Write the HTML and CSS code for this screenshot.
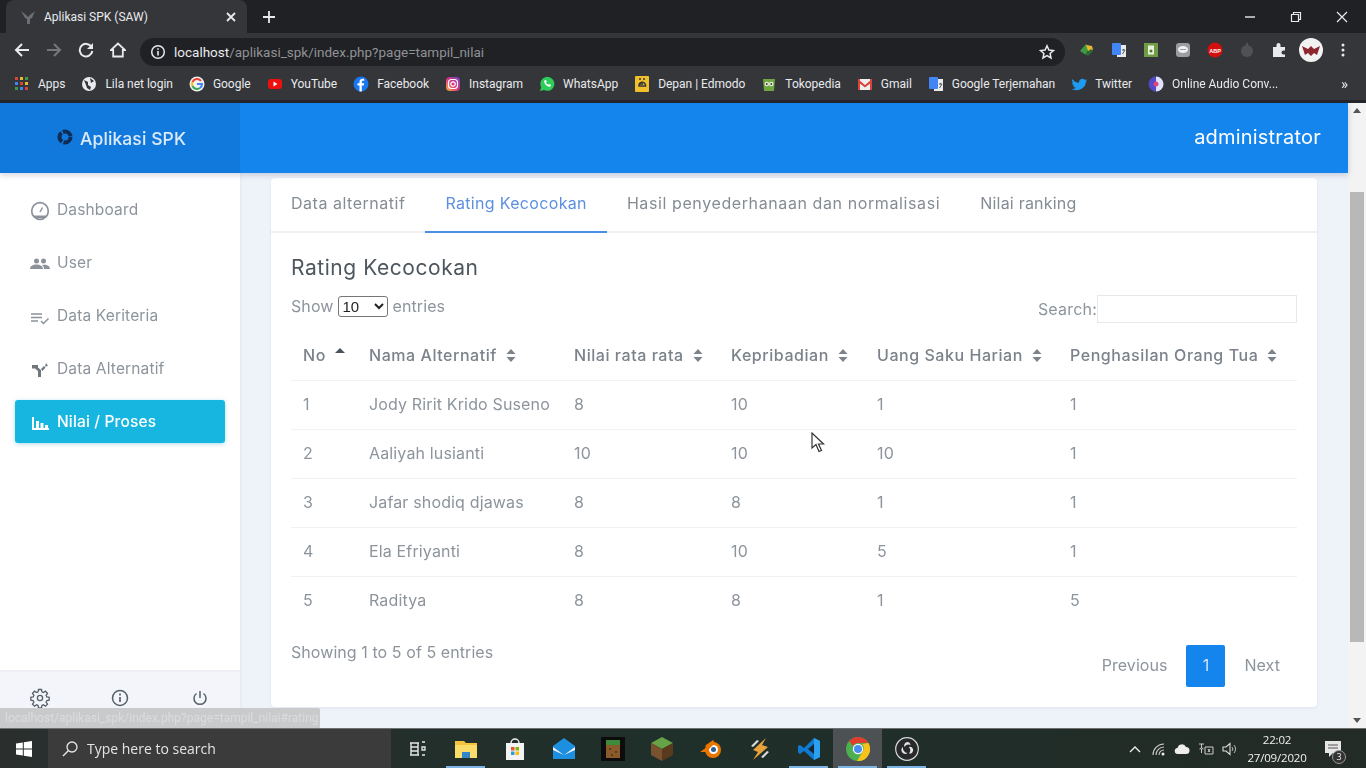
FILE: index.html
```html
<!DOCTYPE html>
<html lang="id">
<head>
<meta charset="utf-8">
<title>Aplikasi SPK (SAW)</title>
<link rel="stylesheet" href="styles.css">
</head>
<body>
<div class="screen">
  <div class="browser">
    <div class="tabstrip">
      <div class="tab">
        <svg class="ico16" viewBox="0 0 16 16"><path d="M1 2l5 4 2 2 2-2 5-4-3 7-2 1v5H7v-5L5 9z" fill="#6b6e73"/></svg>
        <span class="tab-title">Aplikasi SPK (SAW)</span>
        <svg class="tab-x" viewBox="0 0 10 10"><path d="M1 1l8 8M9 1L1 9" stroke="#e8eaed" stroke-width="1.8"/></svg>
      </div>
      <svg class="newtab" viewBox="0 0 12 12"><path d="M6 0v12M0 6h12" stroke="#e8eaed" stroke-width="1.8"/></svg>
      <div class="winbtns">
        <svg viewBox="0 0 12 12"><path d="M1 6h10" stroke="#e8eaed" stroke-width="1.4"/></svg>
        <svg viewBox="0 0 12 12"><path d="M1.5 3.5h7v7h-7zM3.5 3.5v-2h7v7h-2" fill="none" stroke="#e8eaed" stroke-width="1.2"/></svg>
        <svg viewBox="0 0 12 12"><path d="M1 1l10 10M11 1L1 11" stroke="#e8eaed" stroke-width="1.2"/></svg>
      </div>
    </div>
    <div class="toolbar">
      <div class="navs">
        <svg viewBox="0 0 16 16"><path d="M15 8H2M8 2L2 8l6 6" fill="none" stroke="#e8eaed" stroke-width="2"/></svg>
        <svg viewBox="0 0 16 16"><path d="M1 8h13M8 2l6 6-6 6" fill="none" stroke="#75777b" stroke-width="2"/></svg>
        <svg viewBox="0 0 16 16"><path d="M13.5 5A6.3 6.3 0 1 0 14.3 9" fill="none" stroke="#e8eaed" stroke-width="2"/><path d="M15 1v6H9z" fill="#e8eaed"/></svg>
        <svg viewBox="0 0 16 16"><path d="M8 1.5L1 8h2.2v6.5h9.6V8H15z" fill="none" stroke="#e8eaed" stroke-width="1.8"/></svg>
      </div>
      <div class="omnibox">
        <svg class="ico16" viewBox="0 0 16 16"><circle cx="8" cy="8" r="6.3" fill="none" stroke="#e8eaed" stroke-width="1.5"/><path d="M8 7v4.5M8 4.2v1.6" stroke="#e8eaed" stroke-width="1.6"/></svg>
        <span class="url"><b class="host">localhost</b>/aplikasi_spk/index.php?page=tampil_nilai</span>
        <svg class="star" viewBox="0 0 16 16"><path d="M8 1.8l1.9 4.2 4.6.5-3.4 3 .9 4.5L8 11.7 4 14l.9-4.5-3.4-3 4.6-.5z" fill="none" stroke="#e8eaed" stroke-width="1.5"/></svg>
      </div>
      <div class="exts">
        <svg viewBox="0 0 16 16"><path d="M1 9l6-7 3 3-3 8z" fill="#3f9b42"/><path d="M7 3l6 1 1 4-5 1z" fill="#e9b82e"/><path d="M6 12l6-5 2 2-5 5z" fill="#2d6b33"/></svg>
        <svg viewBox="0 0 16 16"><rect x="6" y="3" width="9" height="12" fill="#e8eaed"/><rect x="1" y="1" width="9" height="12" rx="1" fill="#4285f4"/><path d="M11 8h3M12.500 7v1M11.500 12l2.500-4" stroke="#555" fill="none"/></svg>
        <svg viewBox="0 0 16 16"><rect x="1" y="1" width="14" height="14" fill="#6f9c45"/><rect x="5" y="3.500" width="6" height="9" fill="#e9f1dc"/><circle cx="8" cy="9" r="1.500" fill="#55752f"/></svg>
        <svg viewBox="0 0 16 16"><rect x="1" y="1" width="14" height="14" rx="3" fill="#9b9da0"/><ellipse cx="8" cy="7.500" rx="5" ry="3.500" fill="#f1f1f1"/><path d="M5 7.500h6" stroke="#9b9da0"/></svg>
        <svg viewBox="0 0 16 16"><circle cx="8" cy="8" r="7.500" fill="#d1100f"/><text class="abp" x="8" y="10.500">ABP</text></svg>
        <svg viewBox="0 0 16 16"><circle cx="8" cy="9" r="6" fill="#505154"/><rect x="7" y="1" width="2" height="3" fill="#505154"/></svg>
        <svg viewBox="0 0 16 16"><path d="M2 5h3.500V3a2 2 0 0 1 4 0v2H14v3.500h-1.500a2 2 0 0 0 0 4H14V15H2z" fill="#e8eaed"/></svg>
        <svg class="avatar" viewBox="0 0 24 24"><circle cx="12" cy="12" r="12" fill="#f2f2f2"/><path d="M3 8l6 3 3-3 3 3 6-3-3 9-3-2-3 3-3-3-3 2z" fill="#8c2730"/></svg>
        <svg viewBox="0 0 16 16"><circle cx="8" cy="3" r="1.500" fill="#e8eaed"/><circle cx="8" cy="8" r="1.500" fill="#e8eaed"/><circle cx="8" cy="13" r="1.500" fill="#e8eaed"/></svg>
      </div>
    </div>
    <div class="bookmarks">
      <div class="bm"><svg viewBox="0 0 16 16"><path d="M1 1h3v3H1z" fill="#d8443a"/><path d="M6 1h3v3H6z" fill="#e9b82e"/><path d="M11 1h3v3h-3z" fill="#3f9b42"/><path d="M1 6h3v3H1z" fill="#4285f4"/><path d="M6 6h3v3H6z" fill="#d8443a"/><path d="M11 6h3v3h-3z" fill="#e9b82e"/><path d="M1 11h3v3H1z" fill="#3f9b42"/><path d="M6 11h3v3H6z" fill="#4285f4"/><path d="M11 11h3v3h-3z" fill="#d8443a"/></svg><span>Apps</span></div>
      <div class="bm"><svg viewBox="0 0 16 16"><circle cx="8" cy="8" r="7" fill="#e8eaed"/><path d="M3 4l4 2 0 3 3 2-1 3-3-2-1-3zM9 2l4 3-3 2z" fill="#35363a"/></svg><span>Lila net login</span></div>
      <div class="bm"><svg viewBox="0 0 16 16"><circle cx="8" cy="8" r="7.500" fill="#f1f1f1"/><path d="M12 5A5 5 0 0 0 3.500 6" fill="none" stroke="#ea4335" stroke-width="2"/><path d="M3.500 6a5 5 0 0 0 0 4" fill="none" stroke="#fbbc05" stroke-width="2"/><path d="M3.500 10A5 5 0 0 0 11 12" fill="none" stroke="#34a853" stroke-width="2"/><path d="M8 8h5a5 5 0 0 1-2 4" fill="none" stroke="#4285f4" stroke-width="2"/></svg><span>Google</span></div>
      <div class="bm"><svg viewBox="0 0 16 16"><rect x="1" y="3" width="14" height="10" rx="3" fill="#f00f0f"/><path d="M6.500 5.500l4 2.500-4 2.500z" fill="#fff"/></svg><span>YouTube</span></div>
      <div class="bm"><svg viewBox="0 0 16 16"><circle cx="8" cy="8" r="7.500" fill="#1877f2"/><path d="M8.800 15.500V9.500h2l.3-2.300H8.800V6c0-.8.3-1.200 1.200-1.200h1.200V2.800c-2.800-.5-4.700.3-4.700 3v1.400h-2v2.300h2v6z" fill="#fff"/></svg><span>Facebook</span></div>
      <div class="bm"><svg viewBox="0 0 16 16"><defs><linearGradient id="ig" x1="0" y1="1" x2="1" y2="0"><stop offset="0" stop-color="#f9b13d"/><stop offset=".5" stop-color="#d9307f"/><stop offset="1" stop-color="#6a49d0"/></linearGradient></defs><rect x="1" y="1" width="14" height="14" rx="4" fill="url(#ig)"/><rect x="3.500" y="3.500" width="9" height="9" rx="3" fill="none" stroke="#fff" stroke-width="1.200"/><circle cx="8" cy="8" r="2.200" fill="none" stroke="#fff" stroke-width="1.200"/></svg><span>Instagram</span></div>
      <div class="bm"><svg viewBox="0 0 16 16"><path d="M1 15l1.200-3.800A7 7 0 1 1 5 14z" fill="#2ecc5b"/><path d="M5.500 4.500c-1.500 2 2.500 7 6 6l.5-1.500-2-1-1 .8c-1-.5-1.500-1.200-2-2l.8-1-1-2z" fill="#fff"/></svg><span>WhatsApp</span></div>
      <div class="bm"><svg viewBox="0 0 16 16"><rect x="1" y="0" width="14" height="16" rx="1" fill="#f0bf2c"/><path d="M11.500 10H5a3 3 0 1 1 6.500-1zM5.500 8h3.500" fill="none" stroke="#35363a" stroke-width="1.500"/><path d="M5 3h2M9 3h2" stroke="#35363a" stroke-width="1.400"/></svg><span>Depan | Edmodo</span></div>
      <div class="bm"><svg viewBox="0 0 16 16"><path d="M2 3h12l-1 12H3z" fill="#6fa640"/><circle cx="5.800" cy="8" r="2.300" fill="#e6ecd5"/><circle cx="10.200" cy="8" r="2.300" fill="#e6ecd5"/><circle cx="5.800" cy="8" r=".9" fill="#333"/><circle cx="10.200" cy="8" r=".9" fill="#333"/></svg><span>Tokopedia</span></div>
      <div class="bm"><svg viewBox="0 0 16 16"><rect x="1" y="3" width="14" height="11" fill="#efefef"/><path d="M1 3l7 6 7-6v3l-7 5.500L1 6z M1 3h2v11H1z M13 3h2v11h-2z" fill="#d8443a"/></svg><span>Gmail</span></div>
      <div class="bm"><svg viewBox="0 0 16 16"><rect x="6" y="3" width="9" height="12" fill="#e8eaed"/><rect x="1" y="1" width="9" height="12" rx="1" fill="#4285f4"/><path d="M11 8h3M12.500 7v1M11.500 12l2.500-4" stroke="#555" fill="none"/></svg><span>Google Terjemahan</span></div>
      <div class="bm"><svg viewBox="0 0 16 16"><path d="M1 3c2 2.500 4 3.500 7 3.700C7.800 3 12 1.500 14 4l2-.7-1.200 2 1.200-.3-1.300 1.500C14.500 11 10 15 3.500 14 2.500 14 1.500 13.500 1 13c1.500 0 3-.3 4-1.200-1.500-.2-2.500-1-3-2.300h1.300C1.800 9 1 7.500 1 6.500l1.300.3C1 5.500.7 4.500 1 3z" fill="#1d9bf0"/></svg><span>Twitter</span></div>
      <div class="bm"><svg viewBox="0 0 16 16"><circle cx="8" cy="8" r="7.500" fill="#5248c8"/><path d="M8 .5a7.500 7.500 0 0 1 0 15z" fill="#dfe3fa"/><circle cx="8" cy="8" r="2.500" fill="#e0457a"/></svg><span>Online Audio Conv...</span></div>
      <span class="bm-more">»</span>
    </div>
  </div>

  <div class="app">
    <div class="page">
      <header class="topbar">
        <div class="brand">
          <svg viewBox="0 0 16 16"><circle cx="8" cy="8" r="5.500" fill="none" stroke="#0f2c55" stroke-width="4" stroke-dasharray="10 1.500"/></svg>
          <span>Aplikasi SPK</span>
        </div>
        <div class="user">administrator</div>
      </header>
      <div class="body">
        <aside class="sidebar">
          <nav class="menu">
            <a class="item"><svg viewBox="0 0 20 20"><circle cx="10" cy="10" r="8.300" fill="none" stroke="#8b929b" stroke-width="1.700"/><path d="M4 14.500h12l-1.500 2.500h-9z" fill="#8b929b"/><path d="M10 11l2.500-4.500" stroke="#8b929b" stroke-width="1.500"/></svg><span>Dashboard</span></a>
            <a class="item"><svg viewBox="0 0 20 20"><circle cx="6.500" cy="7" r="2.500" fill="#8b929b"/><circle cx="13.500" cy="7" r="2.500" fill="#8b929b"/><path d="M0 15c0-3 3-4.500 6.500-4.500S13 12 13 15zM14 15c0-1.500-.5-3-2-4 4-1 8 .5 8 4z" fill="#8b929b"/></svg><span>User</span></a>
            <a class="item"><svg viewBox="0 0 20 20"><path d="M1 7h11M1 10.500h11M1 14h7" stroke="#8b929b" stroke-width="1.500"/><path d="M11 14l2.500 2.500 5-5" fill="none" stroke="#8b929b" stroke-width="1.500"/></svg><span>Data Keriteria</span></a>
            <a class="item"><svg viewBox="0 0 20 20"><path d="M2 5h6v2.500L11 10v7H8v-6L5 8.500H2zM11 9l3-3 1.500 1.500L12.500 11z" fill="#6f767e"/><path d="M16 3l2 3-3 .5z" fill="#6f767e"/></svg><span>Data Alternatif</span></a>
            <a class="item active"><svg viewBox="0 0 20 20"><path d="M2 15h17v2H2zM2 4h2v11H2zM6 8h3v7H6zM10.500 10h3v5h-3zM15 12h3v3h-3z" fill="#fff"/></svg><span>Nilai / Proses</span></a>
          </nav>
          <div class="side-foot">
            <svg viewBox="0 0 20 20"><path d="M8.500 1.500h3l.4 2.400 1.500.7 2-1.400 2.100 2.100-1.400 2 .7 1.500 2.400.4v3l-2.400.4-.7 1.500 1.400 2-2.100 2.100-2-1.400-1.500.7-.4 2.400h-3l-.4-2.400-1.500-.7-2 1.400-2.100-2.100 1.400-2-.7-1.500-2.400-.4v-3l2.400-.4.7-1.500-1.400-2 2.100-2.100 2 1.400 1.500-.7z" fill="none" stroke="#55606b" stroke-width="1.300"/><circle cx="10" cy="10" r="2.600" fill="none" stroke="#55606b" stroke-width="1.300"/></svg>
            <svg viewBox="0 0 20 20"><circle cx="10" cy="10" r="7.500" fill="none" stroke="#55606b" stroke-width="1.500"/><path d="M10 9v5M10 5.500v2" stroke="#55606b" stroke-width="1.700"/></svg>
            <svg viewBox="0 0 20 20"><path d="M6.500 5.500a6 6 0 1 0 7 0M10 3v7" fill="none" stroke="#55606b" stroke-width="1.500"/></svg>
          </div>
        </aside>
        <main class="content">
          <section class="card">
            <div class="tabs">
              <a class="tb tb-a">Data alternatif</a>
              <a class="tb tb-b current">Rating Kecocokan</a>
              <a class="tb tb-c">Hasil penyederhanaan dan normalisasi</a>
              <a class="tb tb-d">Nilai ranking</a>
            </div>
            <div class="pane">
              <h2 class="title">Rating Kecocokan</h2>
              <div class="tools">
                <label class="len">Show
                  <select class="sel"><option>10</option></select>
                  entries</label>
                <label class="search">Search:<input class="q" type="text"></label>
              </div>
              <table class="grid">
                <colgroup>
                  <col class="c1"><col class="c2"><col class="c3"><col class="c4"><col class="c5"><col class="c6">
                </colgroup>
                <thead>
                  <tr>
                    <th><div class="th">No<svg class="up" viewBox="0 0 10 6"><path d="M5 0l5 5H0z" fill="#4a525b"/></svg></div></th>
                    <th><div class="th">Nama Alternatif<svg viewBox="0 0 10 13"><path d="M5 0l4.500 5H.5zM5 13L.5 8h9z" fill="#7c838b"/></svg></div></th>
                    <th><div class="th">Nilai rata rata<svg viewBox="0 0 10 13"><path d="M5 0l4.500 5H.5zM5 13L.5 8h9z" fill="#7c838b"/></svg></div></th>
                    <th><div class="th">Kepribadian<svg viewBox="0 0 10 13"><path d="M5 0l4.500 5H.5zM5 13L.5 8h9z" fill="#7c838b"/></svg></div></th>
                    <th><div class="th">Uang Saku Harian<svg viewBox="0 0 10 13"><path d="M5 0l4.500 5H.5zM5 13L.5 8h9z" fill="#7c838b"/></svg></div></th>
                    <th><div class="th">Penghasilan Orang Tua<svg viewBox="0 0 10 13"><path d="M5 0l4.500 5H.5zM5 13L.5 8h9z" fill="#7c838b"/></svg></div></th>
                  </tr>
                </thead>
                <tbody>
                  <tr><td>1</td><td>Jody Ririt Krido Suseno</td><td>8</td><td>10</td><td>1</td><td>1</td></tr>
                  <tr><td>2</td><td>Aaliyah lusianti</td><td>10</td><td>10</td><td>10</td><td>1</td></tr>
                  <tr><td>3</td><td>Jafar shodiq djawas</td><td>8</td><td>8</td><td>1</td><td>1</td></tr>
                  <tr><td>4</td><td>Ela Efriyanti</td><td>8</td><td>10</td><td>5</td><td>1</td></tr>
                  <tr><td>5</td><td>Raditya</td><td>8</td><td>8</td><td>1</td><td>5</td></tr>
                </tbody>
              </table>
              <div class="foot">
                <div class="info">Showing 1 to 5 of 5 entries</div>
                <div class="pager"><a class="pg">Previous</a><a class="pg on">1</a><a class="pg">Next</a></div>
              </div>
            </div>
          </section>
        </main>
      </div>
    </div>
    <div class="scrollbar">
      <span class="arrow-up"></span>
      <div class="thumb"></div>
      <span class="arrow-down"></span>
    </div>
    <div class="status">localhost/aplikasi_spk/index.php?page=tampil_nilai#rating</div>
    <svg class="cursor" viewBox="0 0 14 21"><path d="M1 1v15l4-3.500 3 7 2.500-1-3-6.500h5z" fill="#fff" stroke="#333" stroke-width="1.200"/></svg>
  </div>

  <footer class="taskbar">
    <div class="start"><svg viewBox="0 0 16 16"><path d="M0 2.500l6.800-1v6H0zM7.800 1.300L16 0v7.500H7.800zM0 8.500h6.800v6l-6.800-1zM7.800 8.500H16V16l-8.200-1.300z" fill="#fff"/></svg></div>
    <div class="searchbox">
      <svg viewBox="0 0 16 16"><circle cx="10" cy="6" r="5" fill="none" stroke="#e6e6e6" stroke-width="1.300"/><path d="M6.500 9.500L1 15" stroke="#e6e6e6" stroke-width="1.500"/></svg>
      <span>Type here to search</span>
    </div>
    <div class="apps">
      <div class="app-i"><svg viewBox="0 0 20 20"><path d="M3 4h9M3 16h9M4 4v12M11 4v12M4 8h7M4 12h7" fill="none" stroke="#e6e6e6" stroke-width="1.400"/><path d="M15 3h3M15 16h3M15 8h3v3h-3z" fill="none" stroke="#e6e6e6" stroke-width="1.300"/></svg></div>
      <div class="app-i open"><svg viewBox="0 0 24 24"><path d="M1 4h9l2 2h11v15H1z" fill="#f5c33b"/><path d="M1 8h22v13H1z" fill="#fbdc6a"/><path d="M8 15h8v6H8z" fill="#2f86c9"/></svg></div>
      <div class="app-i"><svg viewBox="0 0 24 24"><path d="M8 6a4 4 0 0 1 8 0" fill="none" stroke="#eee" stroke-width="1.500"/><path d="M3 6h18v17H3z" fill="#f3f3f3"/><path d="M8 10h3.500v3.500H8z" fill="#e8542c"/><path d="M12.500 10H16v3.500h-3.500z" fill="#7fba00"/><path d="M8 14.500h3.500V18H8z" fill="#2a9fe0"/><path d="M12.500 14.500H16V18h-3.500z" fill="#fbbc05"/></svg></div>
      <div class="app-i"><svg viewBox="0 0 24 24"><path d="M1 9l11-8 11 8v13H1z" fill="#1c8fe0"/><path d="M1 10l11 8 11-8v3l-11 5-11-5z" fill="#e9f4fc"/></svg></div>
      <div class="app-i"><svg viewBox="0 0 24 24"><rect width="24" height="24" fill="#0c0c0c"/><rect x="5" y="3" width="14" height="18" fill="#8b5a2b"/><rect x="5" y="3" width="14" height="5" fill="#3f8b3c"/><path d="M8 11h2v2H8zM14 14h2v2h-2zM10 17h2v2h-2z" fill="#5c3a1a"/></svg></div>
      <div class="app-i"><svg viewBox="0 0 24 24"><path d="M12 0l11 6-11 6L1 6z" fill="#66a347"/><path d="M1 6l11 6v12L1 18z" fill="#7a5230"/><path d="M23 6l-11 6v12l11-6z" fill="#593a1e"/></svg></div>
      <div class="app-i"><svg viewBox="0 0 24 24"><circle cx="14" cy="13" r="8" fill="#ea7600"/><circle cx="14.500" cy="12.500" r="4.500" fill="#fff"/><circle cx="14.500" cy="12.500" r="2.500" fill="#285f9f"/><path d="M1 15l7-5-2-1 8-6 2 3-9 9z" fill="#ea7600"/></svg></div>
      <div class="app-i"><svg viewBox="0 0 24 24"><path d="M18 1L5 13l5 2-5 8 15-13-6-2z" fill="#e8a33c"/><path d="M3 9l6-6 2 1-6 6zM21 15l-6 6-2-1 6-6z" fill="#dcdcdc"/></svg></div>
      <div class="app-i open"><svg viewBox="0 0 24 24"><path d="M17 1l6 3v16l-6 3-10-9-4 3-2-1.500V9L3 8l4 3z" fill="#0f7ad2"/><path d="M17 1l6 3v16l-6 3z" fill="#2aa0ef"/><path d="M17 7v10l-6-5z" fill="#1a2530"/></svg></div>
      <div class="app-i open chrome"><svg viewBox="0 0 24 24"><circle cx="12" cy="12" r="12" fill="#4caf50"/><path d="M12 0a12 12 0 0 1 10.400 6H12a6 6 0 0 0-5.200 3L3.200 3.900A12 12 0 0 1 12 0z" fill="#e33b2e"/><path d="M22.400 6A12 12 0 0 1 11 24l5.300-8.800A6 6 0 0 0 16 7z" fill="#f9c21a"/><circle cx="12" cy="12" r="5.200" fill="#fff"/><circle cx="12" cy="12" r="4" fill="#4a8df0"/></svg></div>
      <div class="app-i open"><svg viewBox="0 0 24 24"><circle cx="12" cy="12" r="11.300" fill="#28292b" stroke="#d8d8d8" stroke-width="1.200"/><path d="M12 5a3.500 3.500 0 0 1 3.500 3 5 5 0 0 0-6 2A3.500 3.500 0 0 1 12 5zM18 12a3.500 3.500 0 0 1-4 4.500 5 5 0 0 0-.2-6.500A3.500 3.500 0 0 1 18 12zM7 15a3.500 3.500 0 0 1 1-5 5 5 0 0 0 4.500 6A3.500 3.500 0 0 1 7 15z" fill="#e4e4e4"/></svg></div>
    </div>
    <div class="tray">
      <svg viewBox="0 0 12 8"><path d="M1 7l5-5 5 5" fill="none" stroke="#eee" stroke-width="1.400"/></svg>
      <svg viewBox="0 0 16 16"><path d="M3 14A11 11 0 0 1 14 3M6 14a8 8 0 0 1 8-8M9 14a5 5 0 0 1 5-5" fill="none" stroke="#ccc" stroke-width="1.100"/><circle cx="13" cy="13" r="1.500" fill="#eee"/></svg>
      <svg viewBox="0 0 16 16"><path d="M4 13a3 3 0 0 1-.5-6 4.500 4.500 0 0 1 8.500-1 3.500 3.500 0 0 1 0 7z" fill="#eee"/></svg>
      <svg viewBox="0 0 16 16"><path d="M1 3h5M3.500 3v3a2 2 0 0 0 2 2M3.500 6a2 2 0 0 1-2 2M3.500 8v4M7 6h8v7H7zM10 8l2 3M12 8l-2 3" fill="none" stroke="#ccc" stroke-width="1"/></svg>
      <svg viewBox="0 0 16 16"><path d="M1 6h3l4-3.500v11L4 10H1z" fill="none" stroke="#ddd" stroke-width="1.100"/><path d="M10 6a3 3 0 0 1 0 4M12 4a6 6 0 0 1 0 8" fill="none" stroke="#bbb" stroke-width="1"/></svg>
    </div>
    <div class="clock"><span>22:02</span><span>27/09/2020</span></div>
    <div class="notify">
      <svg viewBox="0 0 20 20"><path d="M2 2h16v12H10l-4 4v-4H2z" fill="#e6e6e6"/><path d="M5 6h10M5 9h10" stroke="#555" stroke-width="1"/></svg>
      <span class="badge">3</span>
    </div>
  </footer>
</div>
</body>
</html>
```
FILE: styles.css
```css
* { box-sizing: border-box; }
html, body { margin: 0; height: 100%; overflow: hidden; }
body { font-family: Inter, "Open Sans", sans-serif; background: #fff; }
.screen { width: 1366px; height: 768px; display: flex; flex-direction: column; filter: blur(.4px); }
svg { display: block; flex: none; }
a { text-decoration: none; }

/* browser chrome */
.browser { height: 103px; flex: none; background: #35363a; display: flex; flex-direction: column; font-family: Roboto, "Liberation Sans", sans-serif; border-bottom: 3px solid #23252a; }
.tabstrip { height: 33px; background: #202124; display: flex; align-items: center; padding-left: 6px; flex: none; }
.tab { width: 241px; height: 33px; background: #35363a; border-radius: 8px 8px 0 0; display: flex; align-items: center; padding: 0 11px 0 14px; gap: 8px; color: #e8eaed; font-size: 12px; }
.ico16 { width: 16px; height: 16px; }
.tab-title { flex: 1; }
.tab-x { width: 10px; height: 10px; }
.newtab { width: 12px; height: 12px; margin-left: 16px; }
.winbtns { margin-left: auto; display: flex; gap: 34px; padding-right: 18px; }
.winbtns svg { width: 12px; height: 12px; }
.toolbar { height: 34px; display: flex; align-items: center; flex: none; }
.navs { display: flex; gap: 16px; width: 140px; padding-left: 14px; }
.navs svg { width: 16px; height: 16px; }
.omnibox { width: 925px; height: 28px; background: #202124; border-radius: 14px; display: flex; align-items: center; padding: 0 10px; gap: 8px; margin-top: 3px; }
.url { font-size: 13.500px; color: #8f9296; flex: 1; }
.host { color: #e8eaed; font-weight: 400; }
.star { width: 16px; height: 16px; }
.exts { display: flex; align-items: center; gap: 16px; padding-left: 14px; }
.exts svg { width: 16px; height: 16px; }
.exts .avatar { width: 24px; height: 24px; margin: 0 -4px; }
.abp { font: 700 5.500px "Liberation Sans", sans-serif; fill: #fff; text-anchor: middle; }
.bookmarks { height: 33px; display: flex; align-items: center; padding: 0 14px; gap: 16px; color: #e8eaed; font-size: 12px; letter-spacing: -.02px; flex: none; }
.bm { display: flex; align-items: center; gap: 8px; white-space: nowrap; }
.bm svg { width: 16px; height: 16px; }
.bm-more { margin-left: auto; padding-right: 4px; font-size: 15px; }

/* app */
.app { height: 625px; flex: none; display: flex; position: relative; overflow: hidden; }
.page { flex: 1; display: flex; flex-direction: column; min-width: 0; background: #eef2f9; }
.topbar { height: 70px; flex: none; background: #1585ee; color: #fff; display: flex; align-items: center; justify-content: space-between; box-shadow: 0 2px 6px rgba(20,40,80,.2); position: relative; z-index: 2; }
.brand { width: 240px; height: 70px; background: #1279dc; display: flex; align-items: center; padding-left: 57px; gap: 7px; font-size: 17.500px; font-weight: 500; color: #dceafa; letter-spacing: .1px; }
.brand svg { width: 16px; height: 16px; margin-top: -2px; }
.user { font-size: 20px; padding-right: 27px; letter-spacing: .2px; margin-top: -2px; }
.body { flex: 1; display: flex; min-height: 0; }
.sidebar { width: 240px; flex: none; background: #fff; display: flex; flex-direction: column; box-shadow: 1px 0 3px rgba(60,80,120,.06); }
.menu { flex: 1; padding: 15px 15px 0; display: flex; flex-direction: column; gap: 10px; }
.item { height: 43px; display: flex; align-items: center; gap: 7px; padding: 0 15px; border-radius: 3px; color: #8d949c; font-size: 15.500px; letter-spacing: .15px; }
.item svg { width: 20px; height: 20px; margin-top: 3px; }
.item span { margin-top: -1px; }
.item.active { background: #17b6e0; color: #fff; font-weight: 500; box-shadow: 0 1px 4px rgba(23,150,200,.35); }
.side-foot { height: 58px; flex: none; background: #f3f5fa; border-top: 2px solid #f0eef5; display: flex; justify-content: space-between; padding: 16px 30px 0; }
.side-foot svg { width: 20px; height: 20px; }
.content { flex: 1; padding: 5px 31px 21px; min-width: 0; }
.card { height: 529px; background: #fff; border-radius: 4px; box-shadow: 0 1px 3px rgba(60,80,120,.08); display: flex; flex-direction: column; }
.tabs { height: 55px; flex: none; display: flex; border-bottom: 2px solid #eef0f3; }
.tb { height: 55px; padding: 15px 20px 0; font-size: 16px; color: #868c94; white-space: nowrap; }
.tb-a { letter-spacing: .52px; }
.tb-b { letter-spacing: .33px; }
.tb-c { letter-spacing: .6px; }
.tb-d { letter-spacing: .22px; }
.tb.current { color: #5d8fe0; border-bottom: 2px solid #4a90e2; }
.pane { flex: 1; padding: 19px 20px 0; display: flex; flex-direction: column; }
.title { margin: 0; font-size: 21px; line-height: 32px; font-weight: 400; color: #4e565e; letter-spacing: .55px; height: 32px; }
.tools { display: flex; justify-content: space-between; height: 40px; margin-top: 4px; align-items: flex-start; font-size: 16px; color: #8d949c; }
.len { display: flex; align-items: center; gap: 4px; height: 32px; margin-top: 2px; letter-spacing: .1px; }
.sel { width: 50px; height: 21px; margin-right: 1px; font: 15px "Liberation Sans", sans-serif; color: #222; background: #fff; border: 1px solid #767676; border-radius: 3px; padding: 0; }
.search { display: flex; align-items: center; height: 28px; margin-top: 7px; letter-spacing: .2px; }
.search-label { margin-top: -1px; }
.q { width: 200px; height: 28px; border: 1px solid #e6e8ec; background: #fff; outline: 0; }
.grid { width: 1006px; table-layout: fixed; border-collapse: collapse; margin-top: 3px; }
.c1 { width: 66px; } .c2 { width: 205px; } .c3 { width: 157px; } .c4 { width: 146px; } .c5 { width: 193px; } .c6 { width: 239px; }
.grid th { height: 49px; padding: 0 0 0 12px; text-align: left; font-size: 16px; font-weight: 500; color: #7b828a; border-bottom: 1px solid #f1f2f5; letter-spacing: .55px; white-space: nowrap; }
.th { display: flex; align-items: center; gap: 9px; }
.th svg { width: 10px; height: 13px; }
.th .up { width: 10px; height: 6px; margin-top: -8px; }
.grid td { height: 49px; padding: 0 0 1px 12px; font-size: 16px; color: #8d949c; border-bottom: 1px solid #f1f2f5; letter-spacing: .15px; white-space: nowrap; }
.grid tbody tr:last-child td { border-bottom: 0; }
.foot { display: flex; justify-content: space-between; align-items: flex-start; padding-top: 14px; }
.info { font-size: 16px; color: #8d949c; letter-spacing: .07px; margin-top: 3px; }
.pager { display: flex; align-items: center; margin-top: 6px; margin-right: -2px; font-size: 16px; line-height: 40px; color: #8d949c; letter-spacing: .05px; }
.pg { padding: 0 19px; height: 42px; line-height: 40px; }
.pg.on { background: #1585ee; color: #cfe6fb; width: 39px; padding: 0; text-align: center; border-radius: 2px; }

/* scrollbar */
.scrollbar { width: 18px; flex: none; background: #f3f3f3; display: flex; flex-direction: column; align-items: center; padding: 5px 0; }
.arrow-up { width: 0; height: 0; border: 4px solid transparent; border-top: 0; border-bottom: 5px solid #555; }
.thumb { width: 14px; height: 450px; margin-top: 79px; background: #b8b8b8; }
.arrow-down { width: 0; height: 0; border: 4px solid transparent; border-bottom: 0; border-top: 5px solid #555; margin-top: auto; }

/* overlays */
.status { position: absolute; left: 0; bottom: 0; width: 320px; height: 20px; line-height: 20px; background: #c9cacc; color: #dcdcde; font-size: 12px; padding-left: 5px; border-top-right-radius: 2px; white-space: nowrap; overflow: hidden; font-family: Roboto, sans-serif; }
.cursor { position: absolute; left: 811px; top: 329px; width: 14px; height: 21px; }

/* taskbar */
.taskbar { height: 40px; flex: none; display: flex; align-items: center; background: linear-gradient(90deg, #2a2f2e, #1f2f2a 50%, #232b26); border-top: 1px solid #6e7072; color: #f0f0f0; font-family: "Open Sans", sans-serif; }
.start { width: 48px; display: flex; justify-content: center; }
.start svg { width: 16px; height: 16px; }
.searchbox { width: 343px; height: 39px; background: #3b3b3b; display: flex; align-items: center; padding-left: 14px; gap: 9px; font-size: 14px; color: #e4e4e4; }
.searchbox svg { width: 16px; height: 16px; }
.apps { display: flex; padding-left: 1px; }
.app-i { width: 49px; height: 39px; display: flex; align-items: center; justify-content: center; position: relative; }
.app-i svg { width: 24px; height: 24px; }
.app-i:first-child svg { width: 20px; height: 20px; }
.app-i.open::after { content: ""; position: absolute; left: 5px; right: 5px; bottom: 0; height: 2px; background: #7db4e6; }
.app-i.chrome { background: #4d5154; }
.tray { margin-left: auto; display: flex; align-items: center; gap: 8px; }
.tray svg { width: 16px; height: 16px; }
.tray svg:first-child { width: 12px; height: 8px; margin-right: 1px; }
.clock { width: 78px; margin-left: 0; display: flex; flex-direction: column; align-items: center; gap: 2px; font-size: 11.500px; line-height: 16px; letter-spacing: -.2px; }
.notify { width: 50px; height: 39px; display: flex; align-items: center; justify-content: center; position: relative; padding-right: 17px; }
.notify svg { width: 20px; height: 20px; }
.badge { position: absolute; right: 20px; bottom: 4px; width: 14px; height: 14px; border-radius: 50%; background: #333; border: 1px solid #999; color: #eee; font-size: 9px; line-height: 12px; text-align: center; }
```
